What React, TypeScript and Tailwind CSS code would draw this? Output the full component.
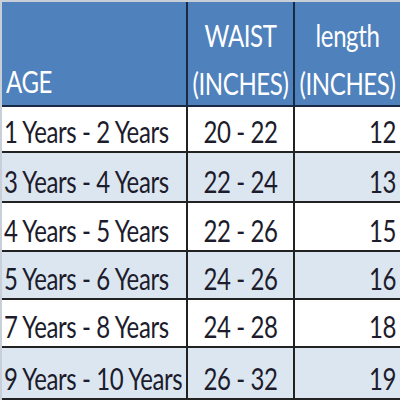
import React from "react";

const rows = [
  { age: "1 Years - 2 Years", waist: "20 - 22", length: "12" },
  { age: "3 Years - 4 Years", waist: "22 - 24", length: "13" },
  { age: "4 Years - 5 Years", waist: "22 - 26", length: "15" },
  { age: "5 Years - 6 Years", waist: "24 - 26", length: "16" },
  { age: "7 Years - 8 Years", waist: "24 - 28", length: "18" },
  { age: "9 Years - 10 Years", waist: "26 - 32", length: "19" },
];

const heights = ["h-[46px]", "h-[50px]", "h-[49px]", "h-[48px]", "h-[48px]", "h-[52px]"];

// stretched text, the source image is squeezed horizontally
const T: React.FC<{ children: React.ReactNode }> = ({ children }) => (
  <span className="inline-block origin-bottom scale-y-[1.25]">{children}</span>
);

const App: React.FC = () => {
  return (
    <div className="h-[400px] w-[400px] overflow-hidden bg-[#c9cfd8] pl-[2px] pt-[2px]">
      <table
        className="w-[398px] table-fixed border-collapse text-[24px] leading-none tracking-[-0.4px] text-[#1c1c2c]"
        style={{ fontFamily: 'Lato, "Open Sans", sans-serif' }}
      >
        <colgroup>
          <col className="w-[185px]" />
          <col className="w-[107px]" />
          <col className="w-[106px]" />
        </colgroup>
        <thead>
          <tr className="h-[104px] bg-[#4f81bd] text-white">
            <th className="border-b-2 border-r-2 border-[#1a2a44] px-[4px] pb-[8px] text-left align-bottom font-normal">
              <T>AGE</T>
            </th>
            <th className="border-b-2 border-r-2 border-[#1a2a44] pb-[6px] align-bottom font-normal">
              <div className="flex flex-col items-center gap-[24px]">
                <T>WAIST</T>
                <T>(INCHES)</T>
              </div>
            </th>
            <th className="border-b-2 border-[#1a2a44] pb-[6px] align-bottom font-normal">
              <div className="flex flex-col items-center gap-[24px]">
                <T>length</T>
                <T>(INCHES)</T>
              </div>
            </th>
          </tr>
        </thead>
        <tbody>
          {rows.map((r, i) => (
            <tr
              key={r.age}
              className={`${heights[i]} ${i % 2 === 0 ? "bg-white" : "bg-[#dce6f1]"}`}
            >
              <td className="border-b-2 border-r-2 border-[#222222] px-[2px] pb-[4px] align-bottom whitespace-nowrap">
                <T>{r.age}</T>
              </td>
              <td className="border-b-2 border-r-2 border-[#222222] pb-[4px] text-center align-bottom">
                <T>{r.waist}</T>
              </td>
              <td className="border-b-2 border-[#222222] pb-[4px] pr-[4px] text-right align-bottom">
                <T>{r.length}</T>
              </td>
            </tr>
          ))}
        </tbody>
      </table>
    </div>
  );
};

export default App;
